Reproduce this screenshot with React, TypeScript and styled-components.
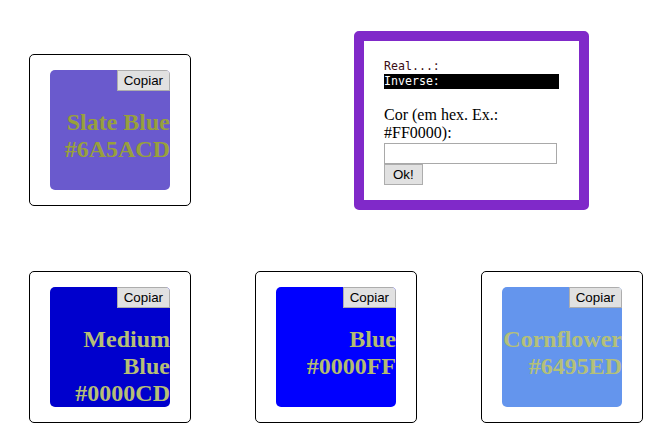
import React from "react";
import styled, { createGlobalStyle } from "styled-components";

const Global = createGlobalStyle`
  html, body { margin: 0; padding: 0; background: #ffffff; }
  body { font-family: "Liberation Serif", "Times New Roman", serif; }
`;

const Page = styled.div`
  padding: 31px 0 0 29px;
  display: flex;
  flex-direction: column;
`;

const TopRow = styled.div`
  display: flex;
  align-items: flex-start;
`;

const BottomRow = styled.div`
  display: flex;
  align-items: flex-start;
  gap: 64px;
  margin-top: 61px;
`;

const Card = styled.div<{ $offset?: number }>`
  box-sizing: border-box;
  width: 162px;
  height: 152px;
  padding: 15px 20px;
  border: 1px solid #000;
  border-radius: 5px;
  background: #fff;
  margin-top: ${(p) => p.$offset ?? 0}px;
  flex: none;
`;

const Swatch = styled.div<{ $bg: string; $fg: string }>`
  width: 120px;
  height: 120px;
  border-radius: 5px;
  overflow: hidden;
  background: ${(p) => p.$bg};
  color: ${(p) => p.$fg};
`;

const ButtonRow = styled.div`
  display: flex;
  justify-content: flex-end;
  height: 21px;
`;

const Button = styled.button<{ $pad?: number }>`
  box-sizing: border-box;
  height: 21px;
  margin: 0;
  padding: 0 ${(p) => p.$pad ?? 6}px;
  border: 1px solid #adadad;
  border-radius: 0;
  background: #e1e1e1;
  color: #000;
  font-family: "Liberation Sans", Arial, sans-serif;
  font-size: 13.33px;
  line-height: 15px;
  cursor: pointer;
`;

const ColorName = styled.h2`
  margin: 18px 0 0 0;
  text-align: right;
  font-family: "Liberation Serif", "Times New Roman", serif;
  font-weight: bold;
  font-size: 24px;
  line-height: 27px;
`;

const Panel = styled.div`
  box-sizing: border-box;
  width: 235px;
  margin-left: 163px;
  padding: 18px 20px 15px 20px;
  border: 10px solid #8029c9;
  border-radius: 5px;
  background: #fff;
  flex: none;
`;

const MonoLine = styled.div<{ $inverse?: boolean }>`
  font-family: "DejaVu Sans Mono", Consolas, monospace;
  font-size: 11.6px;
  line-height: 15px;
  height: 15px;
  white-space: pre;
  color: ${(p) => (p.$inverse ? "#ffffff" : "#3a0d14")};
  background: ${(p) => (p.$inverse ? "#000000" : "transparent")};
`;

const Label = styled.label`
  display: block;
  margin-top: 17px;
  font-family: "Liberation Serif", "Times New Roman", serif;
  font-size: 16px;
  line-height: 18px;
  color: #000;
`;

const HexInput = styled.input`
  display: block;
  box-sizing: border-box;
  width: 173px;
  height: 21px;
  margin: 1px 0 0 0;
  padding: 1px 2px;
  border: 1px solid #a9a9a9;
  border-radius: 0;
  background: #fff;
  font-family: "Liberation Sans", Arial, sans-serif;
  font-size: 13.33px;
  outline: none;
`;

type ColorInfo = { lines: string[]; hex: string; fg: string };

const colors: ColorInfo[] = [
  { lines: ["Medium Blue"], hex: "#0000CD", fg: "#b6bf76" },
  { lines: ["Blue"], hex: "#0000FF", fg: "#b3bc72" },
  { lines: ["Cornflower"], hex: "#6495ED", fg: "#b4c079" },
];

function ColorCard({ info, offset }: { info: ColorInfo; offset?: number }) {
  return (
    <Card $offset={offset}>
      <Swatch $bg={info.hex} $fg={info.fg}>
        <ButtonRow>
          <Button type="button">Copiar</Button>
        </ButtonRow>
        <ColorName>
          {info.lines.join(" ")}
          <br />
          {info.hex}
        </ColorName>
      </Swatch>
    </Card>
  );
}

export default function App() {
  return (
    <>
      <Global />
      <Page>
        <TopRow>
          <ColorCard
            offset={23}
            info={{ lines: ["Slate Blue"], hex: "#6A5ACD", fg: "#98a03c" }}
          />
          <Panel>
            <MonoLine>Real...:</MonoLine>
            <MonoLine $inverse>Inverse:</MonoLine>
            <Label htmlFor="hex">Cor (em hex. Ex.: #FF0000):</Label>
            <HexInput id="hex" type="text" />
            <Button type="button" $pad={8}>
              Ok!
            </Button>
          </Panel>
        </TopRow>
        <BottomRow>
          {colors.map((c) => (
            <ColorCard key={c.hex} info={c} />
          ))}
        </BottomRow>
      </Page>
    </>
  );
}
